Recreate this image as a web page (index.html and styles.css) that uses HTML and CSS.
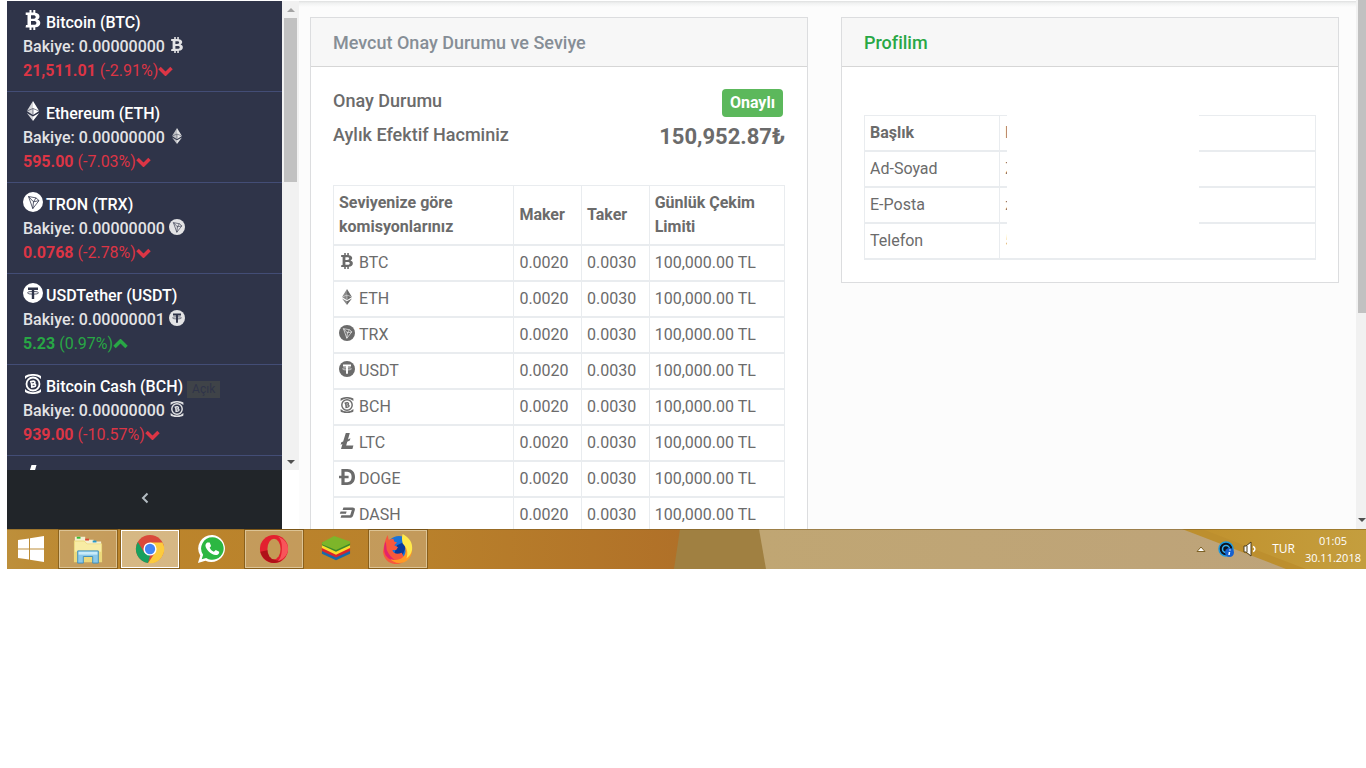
FILE: index.html
```
<!DOCTYPE html>
<html lang="tr">
<head>
    <meta charset="UTF-8">
    <meta name="viewport" content="width=device-width, initial-scale=1.0">
    <title>Profilim</title>
    <link rel="stylesheet" href="styles.css">
</head>
<body>
    <!-- Coin icons -->
    <svg class="sprite" aria-hidden="true">
        <symbol id="btc" viewBox="0 0 20 20">
            <path fill-rule="evenodd" d="M6.500 0h2v2.500h1.800V0h2v2.700c2.600.3 4.200 1.500 4.200 3.700 0 1.500-.8 2.500-2.100 3 1.800.5 2.900 1.600 2.900 3.500 0 2.700-1.900 4.100-5 4.400V20h-2v-2.600H8.500V20h-2v-2.600H2.600l.4-2.400h1.500V5H2.700V2.500h3.800zM8 5.200v3.500h2.100c1.700 0 2.600-.6 2.600-1.800s-.9-1.700-2.600-1.700zM8 11.100v3.700h2.600c1.800 0 2.800-.6 2.800-1.900 0-1.200-1-1.800-2.900-1.800z"/>
        </symbol>
        <symbol id="eth" viewBox="0 0 20 20">
            <path fill-opacity=".8" d="M10 0v14L3.800 10zM10 15.400V20l-6.200-8z"/>
            <path d="M10 0v14l6.200-4zM10 15.400V20l6.200-8z"/>
            <path class="mark" stroke-width=".6" d="M4 10l6-2.500 6 2.500M10 7.500V14"/>
        </symbol>
        <symbol id="trx" viewBox="0 0 20 20">
            <circle cx="10" cy="10" r="10"/>
            <path class="mark" stroke-width=".8" d="M5.500 4.500l7.500 1.400 3 2.700-6.200 8zM5.500 4.500l5 5.300 2.500-3.900M10.500 9.800L16 8.600M10.500 9.800l-.7 6.800"/>
        </symbol>
        <symbol id="usdt" viewBox="0 0 20 20">
            <circle cx="10" cy="10" r="10"/>
            <path class="mark-fill" d="M5 4.500h10V7h-3.800v9H8.800V7H5z"/>
            <ellipse class="mark" stroke-width=".8" cx="10" cy="9.800" rx="5.500" ry="1.400"/>
        </symbol>
        <symbol id="bch" viewBox="0 0 20 20">
            <circle cx="10" cy="10" r="6.500" fill="none" stroke="currentColor" stroke-width="1.800"/>
            <path d="M2 5V2C6-.7 14-.7 18 2v3C13.500.8 6.500.8 2 5zM2 15v3c4 2.700 12 2.700 16 0v-3c-4.500 4.200-11.500 4.200-16 0z"/>
            <path fill="none" stroke="currentColor" stroke-width="1.700" d="M8.200 7.500l.8 5.400M7 7.800l3.300-.6c2-.3 2.100 2.400.2 2.700l-1.600.2 1.900-.2c2.300-.2 2.400 2.500.2 2.800l-3 .4"/>
        </symbol>
        <symbol id="ltc" viewBox="0 0 20 20">
            <path d="M8.500 0h5l-2.300 8 3.100-1.500-.8 3-3.200 1.500-1.300 4.500H18L16.800 20H2.500l1.800-6.300-2.300 1 .9-3 2.300-1z"/>
        </symbol>
        <symbol id="doge" viewBox="0 0 20 20">
            <path fill-rule="evenodd" d="M3 0h7.500C16.500 0 20 4 20 10s-3.500 10-9.500 10H3v-8.500H0v-3h3zM7 3.500v5h5v3H7v5h3.300c3.700 0 5.500-2.700 5.500-6.500s-1.800-6.500-5.500-6.500z"/>
        </symbol>
        <symbol id="dash" viewBox="0 0 20 20">
            <path d="M5.500 3H17c2.500 0 3.300 1.500 2.700 3.500l-2 6.500c-.6 2-2 3-4.200 3H2l1-3.200h11L16 6.200H4.500zM2 8h7.500l-.8 3H1z"/>
        </symbol>
        <symbol id="chevron" viewBox="0 0 15 10">
            <path d="M1.500 2l6 6 6-6" fill="none" stroke="currentColor" stroke-width="3.500"/>
        </symbol>
    </svg>

    <div class="screen">
        <div class="browser">
            <aside class="sidebar">
                <div class="coin-scroll">
                    <ul class="coin-list">
                        <li>
                            <div class="coin-name"><svg class="icon-lg"><use href="#btc"/></svg>Bitcoin (BTC)</div>
                            <div class="coin-balance">Bakiye: 0.00000000 <svg class="icon"><use href="#btc"/></svg></div>
                            <div class="coin-price down"><span><b>21,511.01</b> (-2.91%)</span><svg class="trend"><use href="#chevron"/></svg></div>
                        </li>
                        <li>
                            <div class="coin-name"><svg class="icon-lg"><use href="#eth"/></svg>Ethereum (ETH)</div>
                            <div class="coin-balance">Bakiye: 0.00000000 <svg class="icon"><use href="#eth"/></svg></div>
                            <div class="coin-price down"><span><b>595.00</b> (-7.03%)</span><svg class="trend"><use href="#chevron"/></svg></div>
                        </li>
                        <li>
                            <div class="coin-name"><svg class="icon-lg"><use href="#trx"/></svg>TRON (TRX)</div>
                            <div class="coin-balance">Bakiye: 0.00000000 <svg class="icon"><use href="#trx"/></svg></div>
                            <div class="coin-price down"><span><b>0.0768</b> (-2.78%)</span><svg class="trend"><use href="#chevron"/></svg></div>
                        </li>
                        <li>
                            <div class="coin-name"><svg class="icon-lg"><use href="#usdt"/></svg>USDTether (USDT)</div>
                            <div class="coin-balance">Bakiye: 0.00000001 <svg class="icon"><use href="#usdt"/></svg></div>
                            <div class="coin-price up"><span><b>5.23</b> (0.97%)</span><svg class="trend"><use href="#chevron"/></svg></div>
                        </li>
                        <li>
                            <div class="coin-name"><svg class="icon-lg"><use href="#bch"/></svg>Bitcoin Cash (BCH) <span class="tag">Açık</span></div>
                            <div class="coin-balance">Bakiye: 0.00000000 <svg class="icon"><use href="#bch"/></svg></div>
                            <div class="coin-price down"><span><b>939.00</b> (-10.57%)</span><svg class="trend"><use href="#chevron"/></svg></div>
                        </li>
                        <li>
                            <div class="coin-name"><svg class="icon-lg"><use href="#ltc"/></svg></div>
                        </li>
                    </ul>
                    <div class="scrollbar">
                        <span class="arrow-up"></span>
                        <span class="thumb"></span>
                        <span class="arrow-down"></span>
                    </div>
                </div>
                <button type="button" class="collapse" aria-label="Menüyü daralt">
                    <svg viewBox="0 0 8 12"><path d="M6.500 1.500L2 6l4.500 4.500" fill="none" stroke="currentColor" stroke-width="2"/></svg>
                </button>
            </aside>

            <main class="content">
                <section class="card">
                    <h2 class="card-header">Mevcut Onay Durumu ve Seviye</h2>
                    <div class="card-body">
                        <div class="status-row">
                            <span>Onay Durumu</span>
                            <span class="badge">Onaylı</span>
                        </div>
                        <div class="status-row">
                            <span>Aylık Efektif Hacminiz</span>
                            <strong class="volume">150,952.87₺</strong>
                        </div>
                        <table class="table fees">
                            <thead>
                                <tr>
                                    <th class="col-coin">Seviyenize göre komisyonlarınız</th>
                                    <th class="col-fee">Maker</th>
                                    <th class="col-fee">Taker</th>
                                    <th>Günlük Çekim Limiti</th>
                                </tr>
                            </thead>
                            <tbody>
                                <tr><td><div class="coin"><svg class="icon"><use href="#btc"/></svg>BTC</div></td><td>0.0020</td><td>0.0030</td><td>100,000.00 TL</td></tr>
                                <tr><td><div class="coin"><svg class="icon"><use href="#eth"/></svg>ETH</div></td><td>0.0020</td><td>0.0030</td><td>100,000.00 TL</td></tr>
                                <tr><td><div class="coin"><svg class="icon"><use href="#trx"/></svg>TRX</div></td><td>0.0020</td><td>0.0030</td><td>100,000.00 TL</td></tr>
                                <tr><td><div class="coin"><svg class="icon"><use href="#usdt"/></svg>USDT</div></td><td>0.0020</td><td>0.0030</td><td>100,000.00 TL</td></tr>
                                <tr><td><div class="coin"><svg class="icon"><use href="#bch"/></svg>BCH</div></td><td>0.0020</td><td>0.0030</td><td>100,000.00 TL</td></tr>
                                <tr><td><div class="coin"><svg class="icon"><use href="#ltc"/></svg>LTC</div></td><td>0.0020</td><td>0.0030</td><td>100,000.00 TL</td></tr>
                                <tr><td><div class="coin"><svg class="icon"><use href="#doge"/></svg>DOGE</div></td><td>0.0020</td><td>0.0030</td><td>100,000.00 TL</td></tr>
                                <tr><td><div class="coin"><svg class="icon"><use href="#dash"/></svg>DASH</div></td><td>0.0020</td><td>0.0030</td><td>100,000.00 TL</td></tr>
                            </tbody>
                        </table>
                    </div>
                </section>

                <section class="card">
                    <h2 class="card-header green">Profilim</h2>
                    <div class="card-body profile">
                        <table class="table">
                            <thead>
                                <tr><th class="col-label">Başlık</th><th>B</th></tr>
                            </thead>
                            <tbody>
                                <tr><td>Ad-Soyad</td><td>Z</td></tr>
                                <tr><td>E-Posta</td><td>z</td></tr>
                                <tr><td>Telefon</td><td>5</td></tr>
                            </tbody>
                        </table>
                        <!-- hides the personal details -->
                        <div class="mask"></div>
                    </div>
                </section>
            </main>

            <div class="page-scrollbar">
                <span class="thumb"></span>
                <span class="arrow-down"></span>
            </div>
        </div>

        <footer class="taskbar">
            <svg class="wallpaper" viewBox="0 0 1359 40" preserveAspectRatio="none" aria-hidden="true">
                <defs>
                    <linearGradient id="wood"><stop offset="0" stop-color="#bd8f3b"/><stop offset=".15" stop-color="#bc852c"/><stop offset=".6" stop-color="#b9812b"/><stop offset="1" stop-color="#b07028"/></linearGradient>
                    <linearGradient id="sand"><stop offset="0" stop-color="#c0a673"/><stop offset="1" stop-color="#bda37b"/></linearGradient>
                    <linearGradient id="gold"><stop offset="0" stop-color="#c1922e"/><stop offset="1" stop-color="#c49e3e"/></linearGradient>
                </defs>
                <path fill="url(#wood)" d="M0 0h680v40H0z"/>
                <path fill="#a08041" d="M673 0h100v40H667z"/>
                <path fill="url(#sand)" d="M752 0h607v40H759z"/>
                <path fill="#bd8f2e" d="M1175 0h184v40h-80z"/>
                <path fill="url(#gold)" d="M1195 0h164v40h-60z"/>
                <path fill="#7a5a20" fill-opacity=".5" d="M0 0h1359v1H0z"/>
            </svg>
            <nav class="apps">
                <button type="button" class="start" aria-label="Başlat">
                    <svg viewBox="0 0 28 28"><path fill="#fff" d="M1 5l11-1.500v10H1zM13 3.300L27 1v12.500H13zM1 14.500h11v10L1 23zM13 14.500h14V27l-14-2.300z"/></svg>
                </button>
                <button type="button" class="open" aria-label="Dosya Gezgini">
                    <svg viewBox="0 0 32 32">
                        <path fill="#f4f0d0" d="M2 5V3h11v3h9v2h8v4H2z"/>
                        <path fill="#3b3" d="M4 3h4v2H4z"/><path fill="#d43" d="M13 5h4v2h-4z"/><path fill="#29c" d="M21 7h4v2h-4z"/>
                        <path fill="#ecd97c" d="M1 7h11l3 3h16v20H1z"/>
                        <path fill="#f8eca4" d="M2 8h10l3 3h15v8H2z"/>
                        <path fill="#8cc9ea" stroke="#3d8fbd" d="M5 31V18h22v13h-6v-7H11v7z"/>
                        <path fill="#c9ebf9" d="M6 19h20v3H6z"/>
                    </svg>
                </button>
                <button type="button" class="open active" aria-label="Chrome">
                    <svg viewBox="0 0 32 32">
                        <circle cx="16" cy="16" r="15" fill="#d9483b"/>
                        <path fill="#18a05e" d="M3 8.500l7 11.500 6 3-2 8A15 15 0 0 1 3 8.500z"/>
                        <path fill="#fccb3d" d="M16 9h13.300A15 15 0 0 1 14 31l8-12z"/>
                        <circle cx="16" cy="16" r="7" fill="#fff"/>
                        <circle cx="16" cy="16" r="5.500" fill="#4285f4"/>
                    </svg>
                </button>
                <button type="button" aria-label="WhatsApp">
                    <svg viewBox="0 0 32 32">
                        <path fill="#fff" d="M16.500 1A14.500 14.500 0 1 1 9 28.500L1 31l2.500-8A14.500 14.500 0 0 1 16.500 1z"/>
                        <path fill="#2cb742" d="M16.500 3.500a12 12 0 1 1-6.700 22L5 27l1.500-4.800A12 12 0 0 1 16.500 3.500z"/>
                        <path fill="#fff" d="M11 9h2.500l1.500 3.700-1.500 2c1 2 2.500 3.500 4.500 4.300l2-2 3.700 1.800c.2 2.500-1.700 3.700-3.700 3.700C15 22 9.500 16.500 9 12.500 9 11 10 9.700 11 9z"/>
                    </svg>
                </button>
                <button type="button" class="open" aria-label="Opera">
                    <svg viewBox="0 0 32 32">
                        <ellipse cx="16" cy="16" rx="15" ry="15" fill="#e3202f"/>
                        <path fill="#b01018" d="M1.500 19A15 15 0 0 0 25 28c-9 2-15-4-15-11z"/>
                        <path fill="#f8555a" d="M20 3c6 2 6 22 0 26 4-1 11-6 11-13S25 4 20 3z"/>
                        <ellipse cx="16" cy="16" rx="7" ry="11" fill="#c49a55"/>
                    </svg>
                </button>
                <button type="button" aria-label="BlueStacks">
                    <svg viewBox="0 0 32 32">
                        <path fill="#1769aa" d="M1 18l15-6 15 6v3l-15 7-15-7z"/>
                        <path fill="#d9252b" d="M1 15l15-6 15 6v3l-15 7-15-7z"/>
                        <path fill="#fbdc2a" d="M1 12l15-6 15 6v3l-15 7-15-7z"/>
                        <path fill="#3c8a2b" d="M1 9h30v3l-15 7-15-7z"/>
                        <path fill="#7db52a" d="M1 9l13-7 17 6v2l-15 7-15-6z"/>
                    </svg>
                </button>
                <button type="button" class="open" aria-label="Firefox">
                    <svg viewBox="0 0 32 32">
                        <circle cx="17" cy="15" r="13" fill="#1a73d8"/>
                        <path fill="#0a3a9a" d="M15 12l6-3 3 6-3 7-9-1z"/>
                        <path fill="#f8583c" d="M5 1l1 5 5-1 1 3 3 1-3 3 4 2-2 3h-4c1 4 5 5 10 3l4 8c-8 8-23 4-24-9C1 12 2 6 5 1z"/>
                        <path fill="#e3246b" d="M3 8l1 9c2 5 6 9 9 11C4 28-1 20 2 10z"/>
                        <path fill="#ff9a26" d="M22 6c4 2 9 6 9 11 0 8-6 14-14 14-4 0-7-2-9-4 9 2 15-1 16-8 0-5-1-8-2-13z"/>
                        <path fill="#ffe94a" d="M21 0c7 4 11 9 10 17-1 4-3 7-6 9 2-6 1-11-4-16-1-4-1-7 0-10z"/>
                    </svg>
                </button>
            </nav>
            <div class="tray">
                <svg class="tray-up" viewBox="0 0 10 6"><path fill="#fff" stroke="#7d6226" d="M1 5.500L5 1l4 4.500z"/></svg>
                <svg class="tray-icon" viewBox="0 0 16 16">
                    <circle cx="8" cy="8" r="7" fill="#0d1420" stroke="#1c9ae0" stroke-width="1.500"/>
                    <circle cx="8" cy="8" r="3.500" fill="none" stroke="#35b0ee" stroke-width="1.500"/>
                    <circle cx="11.500" cy="11.500" r="4.500" fill="#1660d0"/>
                    <path d="M12 8.500v1M11.500 11l-.5 3" stroke="#fff" stroke-width="1.500"/>
                </svg>
                <svg class="tray-icon" viewBox="0 0 16 16">
                    <path fill="#fff" stroke="#4a3c1c" d="M2 5h2l5-4v14l-5-4H2z"/>
                    <path d="M5 5v6" stroke="#4a3c1c"/>
                    <path fill="none" stroke="#fff" stroke-width="1.500" d="M11 5.500c2.500 1 2.500 4 0 5"/>
                </svg>
                <span class="lang">TUR</span>
                <div class="clock"><time>01:05</time><time>30.11.2018</time></div>
            </div>
        </footer>
    </div>
</body>
</html>
```
FILE: styles.css
```
* {
    box-sizing: border-box;
}
body {
    margin: 0;
    background: #fff;
    font-family: Roboto, "Liberation Sans", sans-serif;
    font-size: 16px;
    line-height: 24px;
    color: #6b6b6b;
}
button {
    border: 0;
    padding: 0;
    cursor: pointer;
}
.sprite {
    display: block;
    width: 0;
    height: 0;
}
.screen {
    margin-left: 7px;
}
.browser {
    display: flex;
    height: 529px;
    overflow: hidden;
}

/* Sidebar */
.sidebar {
    display: flex;
    flex-direction: column;
    flex: 0 0 292px;
    margin-top: 1px;
}
.coin-scroll {
    display: flex;
    flex: 1;
    min-height: 0;
    --hole: #2f3449;
}
.coin-list {
    flex: 1;
    margin: 0;
    padding: 0;
    list-style: none;
    overflow: hidden;
    background: #2f3449;
    font-weight: 500;
}
.coin-list li {
    padding: 10px 16px 8px;
    border-bottom: 1px solid #434d76;
}
.coin-name, .coin-balance, .coin-price {
    display: flex;
    align-items: center;
    height: 24px;
    white-space: pre;
}
.coin-name {
    color: #fff;
}
.coin-balance {
    color: #e3e3e5;
}
.coin-price {
    font-weight: 400;
}
.down {
    color: #dc3545;
}
.up {
    color: #28a745;
}
.up .trend {
    transform: rotate(180deg);
}
.trend {
    width: 15px;
    height: 10px;
}
.icon-lg {
    width: 20px;
    height: 20px;
    margin: 0 3px 7px 0;
    fill: currentColor;
}
.icon {
    width: 16px;
    height: 16px;
    margin-bottom: 4px;
    fill: currentColor;
}
.mark {
    fill: none;
    stroke: var(--hole);
}
.mark-fill {
    fill: var(--hole);
}
.tag {
    padding: 0 5px;
    margin-top: 4px;
    background: #3f4348;
    color: #2f3449;
    font-size: 12px;
    font-weight: 400;
    line-height: 17px;
}
.collapse {
    flex: 0 0 59px;
    width: 275px;
    background: #212529;
    color: #b4bcc2;
}
.collapse svg {
    width: 8px;
    height: 12px;
}

/* Scrollbars */
.scrollbar, .page-scrollbar {
    display: flex;
    flex-direction: column;
    align-items: center;
    background: #f1f1f1;
}
.scrollbar {
    flex: 0 0 17px;
    padding: 7px 0 6px;
}
.thumb {
    width: 13px;
    height: 164px;
    background: #c1c1c1;
}
.arrow-up {
    margin-bottom: 6px;
    border: 4px solid transparent;
    border-top: 0;
    border-bottom-color: #a3a3a3;
}
.arrow-down {
    margin-top: auto;
    border: 4px solid transparent;
    border-bottom: 0;
    border-top-color: #505050;
}
.page-scrollbar {
    flex: 0 0 10px;
    padding-bottom: 7px;
    align-items: flex-end;
    overflow: hidden;
}
.page-scrollbar .thumb {
    width: 8px;
    height: 313px;
}

/* Cards */
.content {
    display: grid;
    grid-template-columns: 1fr 1fr;
    gap: 33px;
    align-items: start;
    flex: 1;
    margin-top: 1px;
    padding: 16px 17px 0 11px;
    background: linear-gradient(#dfe0e0, #f0f1f1 2px, #fcfcfc 6px);
}
.card {
    border: 1px solid #dcdddf;
    background: #fff;
}
.card-header {
    margin: 0;
    padding: 13px 22px 11px;
    border-bottom: 1px solid #d6d6d6;
    background: #f7f7f7;
    color: #868e96;
    font-size: 18px;
    font-weight: 500;
}
.card-header.green {
    color: #28a745;
}
.card-body {
    padding: 22px;
}
.status-row {
    display: flex;
    justify-content: space-between;
    align-items: flex-start;
    height: 34px;
    font-size: 18px;
    font-weight: 500;
}
.badge {
    margin-right: 2px;
    padding: 2px 8px;
    border-radius: 4px;
    background: #5cb85c;
    color: #fff;
    font-size: 16px;
    font-weight: 700;
}
.volume {
    font-size: 22px;
    line-height: 28px;
}
.table {
    width: 100%;
    table-layout: fixed;
    border-spacing: 0;
    border-top: 1px solid #e9ecef;
    border-right: 1px solid #e9ecef;
}
.fees {
    margin-top: 28px;
    --hole: #fff;
}
.table th, .table td {
    padding: 5px;
    border-left: 1px solid #e9ecef;
    border-bottom: 2px solid #e9ecef;
    text-align: left;
}
.table th {
    font-weight: 700;
}
.col-coin {
    width: 40%;
}
.col-fee {
    width: 15%;
}
.col-label {
    width: 30%;
}
.coin {
    display: flex;
    align-items: center;
    gap: 4px;
    height: 24px;
}
.profile {
    position: relative;
    padding-top: 48px;
}
.mask {
    position: absolute;
    top: 40px;
    bottom: 24px;
    left: 165px;
    width: 192px;
    background: #fff;
}

/* Taskbar */
.taskbar {
    position: relative;
    display: flex;
    justify-content: space-between;
    height: 40px;
}
.wallpaper {
    position: absolute;
    width: 100%;
    height: 100%;
}
.apps {
    position: relative;
    display: flex;
    gap: 4px;
}
.apps button {
    display: flex;
    align-items: center;
    justify-content: center;
    width: 58px;
    border: 1px solid transparent;
    background: none;
}
.apps .start {
    width: 48px;
}
.apps svg {
    width: 30px;
    height: 30px;
}
.apps .start svg {
    width: 28px;
    height: 28px;
}
.apps .open {
    margin: 1px 0;
    border-color: #dcc394;
    background: rgba(205, 180, 140, 0.5);
    outline: 1px solid rgba(90, 60, 10, 0.5);
}
.apps .active {
    border-color: #fff;
    background: rgba(225, 205, 170, 0.7);
}
.tray {
    position: relative;
    display: flex;
    align-items: center;
    gap: 8px;
    padding-right: 5px;
    color: #fff;
    font-family: "Open Sans", "Noto Sans", sans-serif;
    font-size: 11px;
}
.tray-up {
    width: 10px;
    height: 6px;
    margin-right: 4px;
}
.tray-icon {
    width: 16px;
    height: 16px;
}
.lang {
    padding: 0 2px 0 6px;
    font-size: 12px;
}
.clock {
    display: flex;
    flex-direction: column;
    align-items: center;
    line-height: 17px;
}
```
